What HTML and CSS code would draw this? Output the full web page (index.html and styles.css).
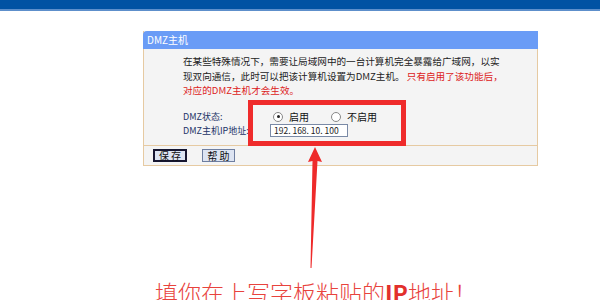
FILE: index.html
```html
<!DOCTYPE html>
<html lang="zh-CN">
<head>
<meta charset="utf-8">
<title>DMZ主机</title>
<link rel="stylesheet" href="styles.css">
</head>
<body>
<div class="topbar"></div>
<div class="panel">
  <div class="panel-head">DMZ主机</div>
  <div class="panel-body">
    <p class="desc">在某些特殊情况下，需要让局域网中的一台计算机完全暴露给广域网，以实<br>现双向通信，此时可以把该计算机设置为DMZ主机。 <span class="warn">只有启用了该功能后，</span><br><span class="warn">对应的DMZ主机才会生效。</span></p>
    <div class="form">
      <div class="label">DMZ状态:</div>
      <div class="value radios">
        <span class="radio checked"></span><span class="rlabel">启用</span>
        <span class="radio"></span><span class="rlabel">不启用</span>
      </div>
      <div class="label">DMZ主机IP地址:</div>
      <div class="value"><span class="ipbox">192. 168. 10. 100</span></div>
    </div>
  </div>
  <div class="panel-foot">
    <span class="btn btn-save">保 存</span>
    <span class="btn">帮 助</span>
  </div>
</div>
<div class="redbox"></div>
<svg class="arrow" width="20" height="125" viewBox="0 0 20 125">
  <polygon points="8,0 1,15 5.5,14 3.5,121 4.5,121 10.5,14 15,15" fill="#ee2a2a"/>
</svg>
<div class="caption">填你在上写字板粘贴的<b>IP</b>地址！</div>
</body>
</html>
```

FILE: styles.css
```css
html, body {
  margin: 0;
  padding: 0;
  background: #ffffff;
  width: 600px;
  height: 300px;
  overflow: hidden;
  position: relative;
  font-family: "Noto Sans CJK SC", "DejaVu Sans", sans-serif;
}
.topbar {
  height: 9px;
  background: #0052a3;
  border-bottom: 2px solid #5d8fcb;
}
.panel {
  margin: 20px 0 0 143px;
  width: 393px;
  border: 1px solid #e6caa2;
  border-top: none;
  background: #f4f4f4;
}
.panel-head {
  height: 18px;
  background: #6a9cf6;
  color: #ffffff;
  font-size: 10px;
  line-height: 18px;
  padding-left: 4px;
  border-radius: 4px 0 0 0;
  margin: 0 -1px 0 -1px;
}
.panel-body {
  padding: 5px 10px 7px 39px;
}
.desc {
  margin: 0;
  font-size: 9.6px;
  line-height: 14.5px;
  color: #222222;
  white-space: nowrap;
}
.warn {
  color: #dd2222;
}
.form {
  display: grid;
  grid-template-columns: 87px 1fr;
  grid-auto-rows: 14px;
  margin-top: 12px;
  font-size: 9px;
  color: #223366;
  align-items: center;
}
.label {
  white-space: nowrap;
}
.radios {
  display: flex;
  align-items: center;
  color: #111111;
  font-size: 10px;
}
.radio {
  width: 10px;
  height: 10px;
  border: 1px solid #888888;
  border-radius: 50%;
  background: #ffffff;
  margin: 0 6px 0 3px;
  position: relative;
  box-sizing: border-box;
}
.radio.checked::after {
  content: "";
  position: absolute;
  left: 2.5px;
  top: 2.5px;
  width: 3px;
  height: 3px;
  border-radius: 50%;
  background: #222222;
}
.rlabel {
  margin-right: 19px;
}
.ipbox {
  display: block;
  width: 73px;
  height: 13px;
  box-sizing: border-box;
  border: 1px solid #7a8aa6;
  background: #ffffff;
  font-size: 8.5px;
  line-height: 11px;
  padding-left: 3px;
  color: #222222;
  white-space: nowrap;
  overflow: hidden;
  width: 78px;
}
.panel-foot {
  border-top: 1px solid #e6caa2;
  height: 20px;
  padding: 3px 0 0 9px;
  box-sizing: border-box;
  display: flex;
  gap: 15px;
  align-items: flex-start;
}
.btn {
  display: inline-block;
  box-sizing: border-box;
  width: 33px;
  height: 13px;
  border: 1px solid #6e7ea0;
  background: #dde4f2;
  font-size: 10px;
  line-height: 11px;
  text-align: center;
  color: #111111;
}
.btn-save {
  width: 34px;
  border: 2px solid #161630;
  line-height: 9px;
}
.redbox {
  position: absolute;
  left: 248px;
  top: 100px;
  width: 148px;
  height: 36px;
  border: 5px solid #ef2b2b;
}
.arrow {
  position: absolute;
  left: 307px;
  top: 147px;
}
.caption {
  position: absolute;
  left: 155px;
  top: 278px;
  font-size: 23px;
  line-height: 28px;
  color: #e8433d;
  white-space: nowrap;
  font-weight: 300;
}
.caption b {
  font-weight: 700;
  color: #e2302c;
}
```
